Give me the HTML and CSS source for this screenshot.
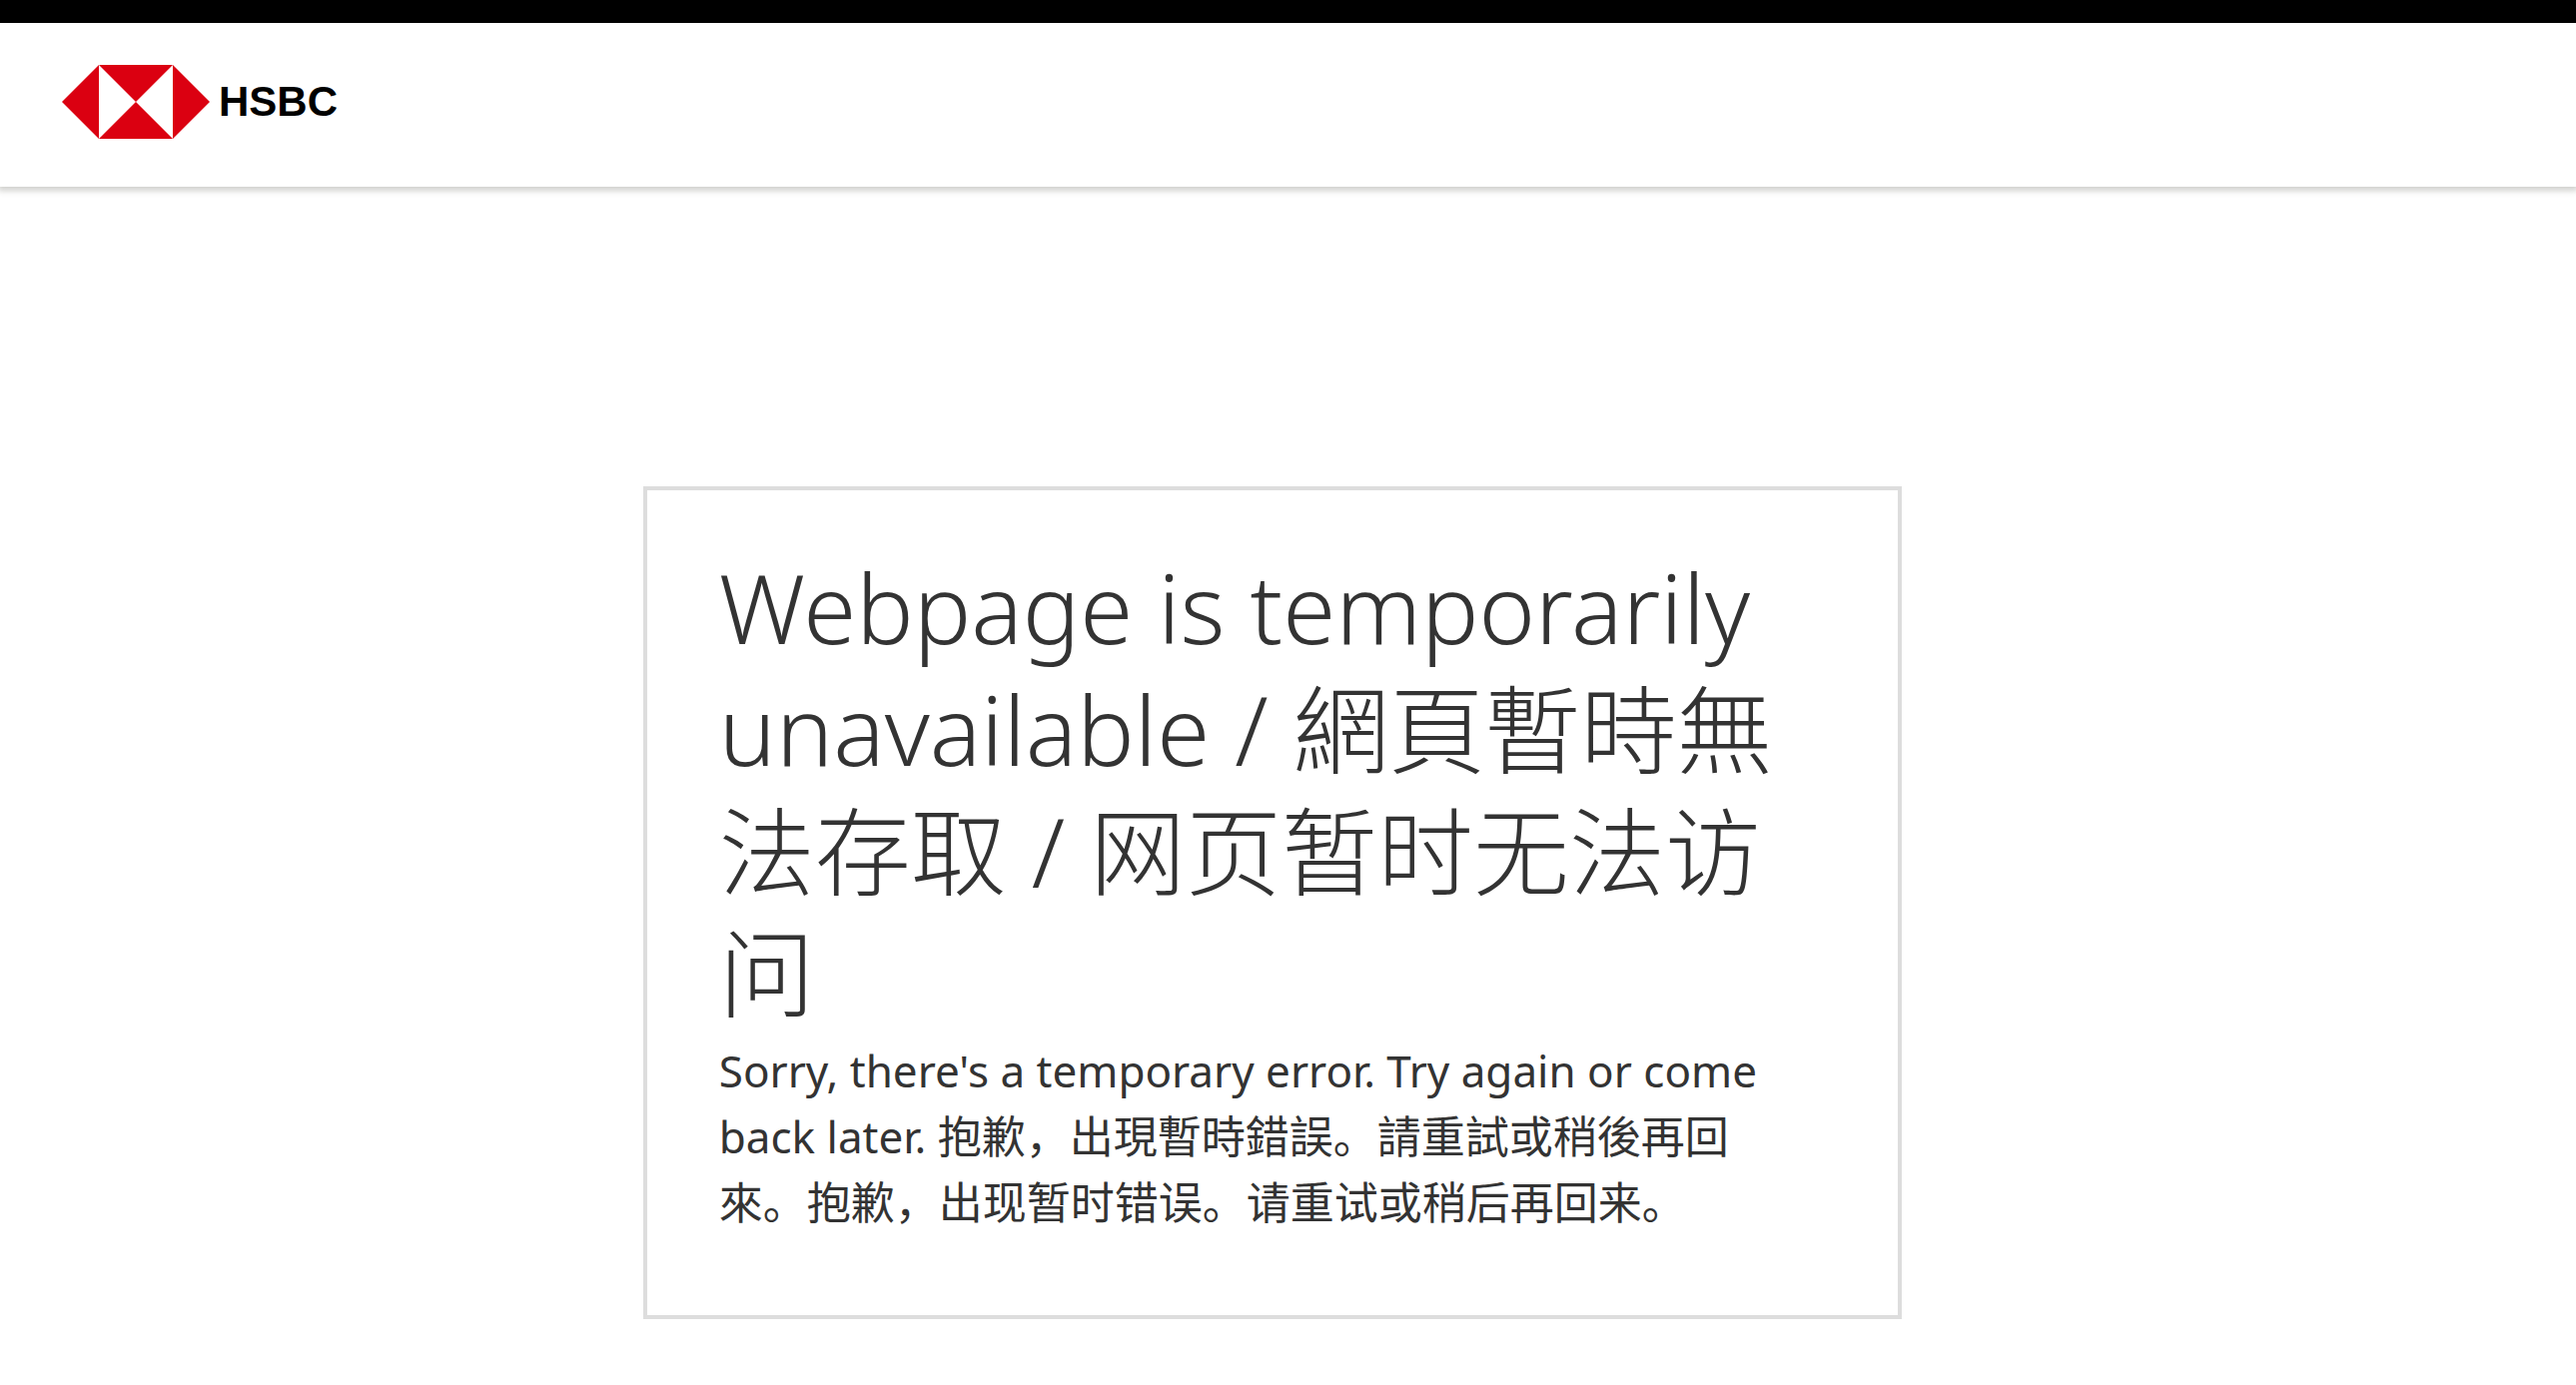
FILE: index.html
```html
<!DOCTYPE html>
<html lang="en">
<head>
    <meta charset="utf-8">
    <meta name="viewport" content="width=device-width, initial-scale=1.0">
    <title>Webpage is temporarily unavailable</title>
    <link rel="stylesheet" href="styles.css">
</head>
<body>

    <header class="header">
        <div class="logo">
            <svg class="logo-mark" viewBox="0 0 148 74" aria-hidden="true">
                <path fill="#db0011" d="M0 37 37 0V74ZM37 0H111L74 37ZM37 74 74 37 111 74ZM111 0 148 37 111 74Z"/>
            </svg>
            <span class="logo-text">HSBC</span>
        </div>
    </header>

    <main class="content">
        <div class="message">
            <h1 class="title">Webpage is temporarily unavailable / 網頁暫時無法存取 / 网页暂时无法访问</h1>
            <p class="text">Sorry, there's a temporary error. Try again or come back later. 抱歉，出現暫時錯誤。請重試或稍後再回來。抱歉，出现暂时错误。请重试或稍后再回来。</p>
        </div>
    </main>

</body>
</html>
```
FILE: styles.css
```css
* {
    box-sizing: border-box;
}

body {
    margin: 0;
    background-color: #fff;
    color: #333;
    font-family: "Noto Sans", "Noto Sans CJK SC", sans-serif;
}

.header {
    padding: 42px 62px 48px;
    border-top: solid 23px #000;
    box-shadow: 0 2px 6px 2px rgba(50, 50, 40, 0.23);
}

.logo {
    display: flex;
    align-items: center;
    gap: 9px;
}
.logo-mark {
    width: 148px;
    height: 74px;
}
.logo-text {
    color: #000;
    font-family: "Liberation Sans", sans-serif;
    font-size: 42px;
    font-weight: bold;
    line-height: 74px;
}

.content {
    padding: 300px 0 64px;
}

.message {
    width: 1260px;
    max-width: 75%;
    margin-left: calc(25% - 1px);
    padding: 56px 88px 80px 72px;
    border: solid 4px #ddd;
}

.title {
    margin: 0 0 4px;
    font-size: 96px;
    font-weight: 300;
    line-height: 122px;
}

.text {
    margin: 0;
    font-size: 44px;
    line-height: 66px;
}
```
